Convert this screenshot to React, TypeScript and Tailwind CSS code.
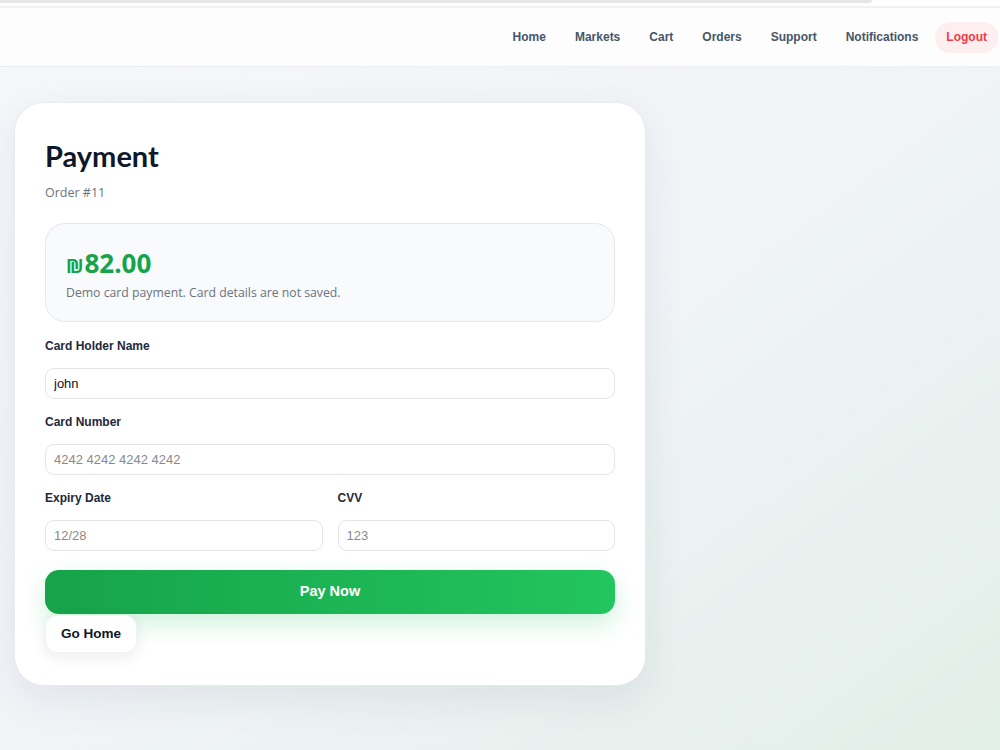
import { useState } from 'react';

const navLinks = ['Home', 'Markets', 'Cart', 'Orders', 'Support', 'Notifications'];

function Field({
  label,
  value,
  placeholder,
  onChange,
}: {
  label: string;
  value: string;
  placeholder: string;
  onChange: (v: string) => void;
}) {
  return (
    <div className="flex flex-col">
      <label className="text-[12px] font-bold text-[#1e293b] leading-[15px] mb-[14px] font-['Liberation_Sans',Arial,sans-serif]">
        {label}
      </label>
      <input
        type="text"
        value={value}
        placeholder={placeholder}
        onChange={(e) => onChange(e.target.value)}
        className="h-[31px] w-full px-[8px] rounded-[9px] border border-[#e2e5ea] bg-white text-[13px] text-[#111] placeholder:text-[#8a8a8a] font-['Liberation_Sans',Arial,sans-serif] focus:outline-none"
      />
    </div>
  );
}

export default function App() {
  const [holder, setHolder] = useState('john');
  const [cardNumber, setCardNumber] = useState('');
  const [expiry, setExpiry] = useState('');
  const [cvv, setCvv] = useState('');

  return (
    <div className="min-h-screen flex flex-col bg-gradient-to-br from-[#f5f7fb] via-[#f1f4f7] to-[#e2eee8] font-['Open_Sans',sans-serif]">
      {/* Top strip */}
      <div className="h-[8px] bg-white border-b-2 border-[#f0f0f0]">
        <div className="w-[872px] h-[3px] bg-[#e6e6e6] rounded-br-[6px]" />
      </div>

      {/* Header */}
      <header className="h-[59px] bg-[#fdfdfd] border-b border-[#eceef2] flex items-center justify-end pr-[2px] font-['Liberation_Sans',Arial,sans-serif] text-[12px] font-bold">
        <nav className="flex items-center gap-[29px]">
          {navLinks.map((link) => (
            <a key={link} href="#" className="text-[#475569]">
              {link}
            </a>
          ))}
        </nav>
        <button className="ml-[17px] h-[31px] px-[11px] rounded-full bg-[#fdeff0] text-[#ef3b45] font-bold">
          Logout
        </button>
      </header>

      {/* Main */}
      <main className="flex-grow pl-[14px] pt-[35px] pb-[60px]">
        <div className="w-[632px] rounded-[30px] border border-[#e8eaee] bg-white px-[30px] pt-[35px] pb-[32px] shadow-[0_12px_40px_rgba(30,41,59,0.08)]">
          <h1 className="text-[29px] leading-[36px] font-bold text-[#0f172a] font-['Lato',sans-serif]">Payment</h1>
          <p className="mt-[10px] text-[12.5px] text-[#6b7280]">Order #11</p>

          <div className="mt-[20px] h-[99px] rounded-[20px] border border-[#e5e8ec] bg-[#f8fafc] px-[20px] pt-[22px]">
            <div className="text-[26px] leading-[34px] font-bold text-[#16a34a] flex items-baseline">
              <span className="text-[19px] mr-[1px]">₪</span>
              <span>82.00</span>
            </div>
            <p className="mt-[1px] text-[12.25px] text-[#6b7280]">Demo card payment. Card details are not saved.</p>
          </div>

          <div className="mt-[17px] flex flex-col gap-[16px]">
            <Field label="Card Holder Name" value={holder} placeholder="" onChange={setHolder} />
            <Field label="Card Number" value={cardNumber} placeholder="4242 4242 4242 4242" onChange={setCardNumber} />
            <div className="grid grid-cols-2 gap-[15px]">
              <Field label="Expiry Date" value={expiry} placeholder="12/28" onChange={setExpiry} />
              <Field label="CVV" value={cvv} placeholder="123" onChange={setCvv} />
            </div>
          </div>

          <button className="mt-[19px] w-full h-[44px] rounded-[14px] bg-gradient-to-r from-[#16a34a] to-[#22c55e] text-white text-[14.5px] font-bold font-['Liberation_Sans',Arial,sans-serif] shadow-[0_10px_24px_rgba(34,197,94,0.22)]">
            Pay Now
          </button>
          <button className="mt-[1px] h-[38px] px-[15px] rounded-[12px] bg-white text-[#0f172a] text-[13.5px] font-bold font-['Liberation_Sans',Arial,sans-serif] border border-[#f1f2f4] shadow-[0_4px_14px_rgba(15,23,42,0.08)]">
            Go Home
          </button>
        </div>
      </main>
    </div>
  );
}
